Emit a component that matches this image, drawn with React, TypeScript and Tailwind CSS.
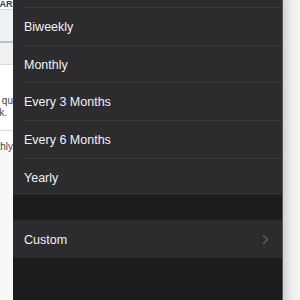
const options = ["Biweekly", "Monthly", "Every 3 Months", "Every 6 Months", "Yearly"];

function BackgroundStrip() {
  return (
    <div className="w-[13px] shrink-0 h-full overflow-hidden flex flex-col bg-white text-[10px] leading-none font-['Liberation_Sans',Arial,sans-serif]">
      <div className="h-[10px] flex items-center border-b border-[#d6dbe3] whitespace-nowrap">
        <span className="ml-[-13px] font-bold text-[#1f3a68] text-[9px]">SHARE</span>
      </div>
      <div className="h-[33px] bg-[#eef1f6] border-b-2 border-[#b5c2d4]" />
      <div className="h-[22px] bg-[#f0f0f0] border-b border-[#dcdcdc]" />
      <div className="h-[65px] flex flex-col justify-end items-end pb-[12px] gap-[2px] text-[#444] whitespace-nowrap">
        <span>your qu</span>
        <span className="pr-[6px]">k.</span>
      </div>
      <div className="border-t border-[#dcdcdc] pt-[11px] flex justify-end whitespace-nowrap text-[#444]">
        <span>Monthly</span>
      </div>
      <div className="flex-1 bg-[#f8f8f8]" />
    </div>
  );
}

function Chevron() {
  return (
    <svg width="7" height="11" viewBox="0 0 7 11" fill="none">
      <path d="M1.5 1.5 L5.5 5.5 L1.5 9.5" stroke="#5d5d61" strokeWidth="1.6" strokeLinecap="round" strokeLinejoin="round" />
    </svg>
  );
}

export default function App() {
  return (
    <div className="w-[300px] h-[300px] flex overflow-hidden bg-white">
      <BackgroundStrip />
      <div className="w-[270px] shrink-0 h-full flex flex-col bg-[#1c1c1e] border-r border-[#55555a] font-['Liberation_Sans',Arial,sans-serif] text-[12.5px] text-[#f2f2f4]">
        <div className="bg-[#2c2c2e]">
          <div className="h-[7px]" />
          {options.map((o) => (
            <div key={o} className="pl-[11px]">
              <div className="h-[37.7px] flex items-center pt-[2px] border-t border-[#3a3a3d]">{o}</div>
            </div>
          ))}
        </div>
        <div className="h-[25px]" />
        <div className="h-[38px] bg-[#2c2c2e] flex items-center justify-between pt-[1px] pl-[11px] pr-[13px]">
          <span>Custom</span>
          <Chevron />
        </div>
      </div>
      <div className="flex-1 h-full bg-gradient-to-r from-[#d4d4d6] via-[#ececee] to-[#f6f6f6]" />
    </div>
  );
}
